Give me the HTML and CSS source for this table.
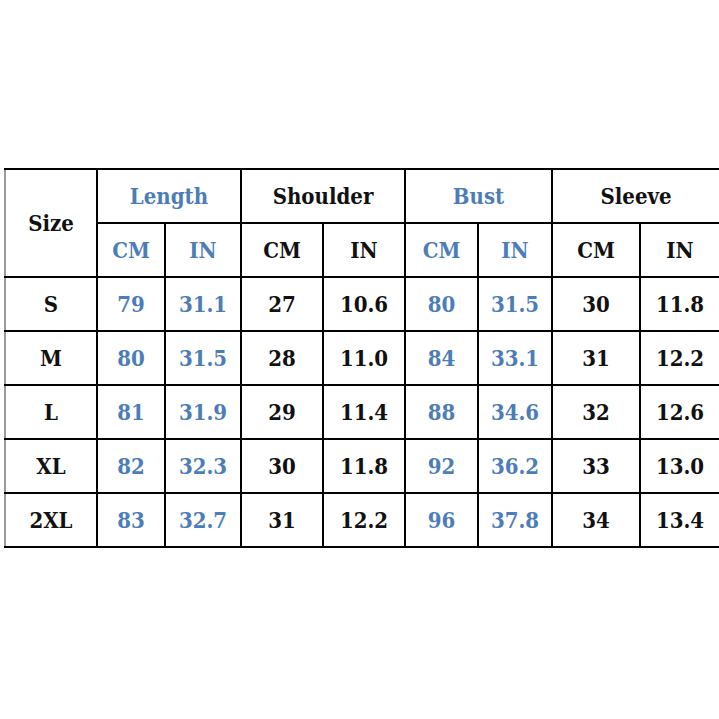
FILE: index.html
```html
<!DOCTYPE html>
<html>
<head>
<meta charset="utf-8">
<link rel="stylesheet" href="styles.css">
</head>
<body>
<div class="page">
<table class="sizes">
  <colgroup>
    <col class="c-size"><col class="c1"><col class="c2"><col class="c3"><col class="c4"><col class="c5"><col class="c6"><col class="c7"><col class="c8">
  </colgroup>
  <thead>
    <tr>
      <th rowspan="2" class="first">Size</th>
      <th colspan="2" class="blue">Length</th>
      <th colspan="2">Shoulder</th>
      <th colspan="2" class="blue">Bust</th>
      <th colspan="2">Sleeve</th>
    </tr>
    <tr>
      <th class="blue">CM</th><th class="blue">IN</th>
      <th>CM</th><th>IN</th>
      <th class="blue">CM</th><th class="blue">IN</th>
      <th>CM</th><th>IN</th>
    </tr>
  </thead>
  <tbody>
    <tr><td class="first">S</td><td class="blue">79</td><td class="blue">31.1</td><td>27</td><td>10.6</td><td class="blue">80</td><td class="blue">31.5</td><td>30</td><td>11.8</td></tr>
    <tr><td class="first">M</td><td class="blue">80</td><td class="blue">31.5</td><td>28</td><td>11.0</td><td class="blue">84</td><td class="blue">33.1</td><td>31</td><td>12.2</td></tr>
    <tr><td class="first">L</td><td class="blue">81</td><td class="blue">31.9</td><td>29</td><td>11.4</td><td class="blue">88</td><td class="blue">34.6</td><td>32</td><td>12.6</td></tr>
    <tr><td class="first">XL</td><td class="blue">82</td><td class="blue">32.3</td><td>30</td><td>11.8</td><td class="blue">92</td><td class="blue">36.2</td><td>33</td><td>13.0</td></tr>
    <tr><td class="first">2XL</td><td class="blue">83</td><td class="blue">32.7</td><td>31</td><td>12.2</td><td class="blue">96</td><td class="blue">37.8</td><td>34</td><td>13.4</td></tr>
  </tbody>
</table>
</div>
</body>
</html>
```
FILE: styles.css
```css
html, body {
  margin: 0;
  padding: 0;
  background: #ffffff;
}
.page {
  width: 719px;
  height: 719px;
  padding-top: 168px;
  padding-left: 4px;
  box-sizing: border-box;
}
.sizes {
  border-collapse: collapse;
  table-layout: fixed;
  width: 715px;
  font-family: "DejaVu Serif Condensed", "DejaVu Serif", "Liberation Serif", serif;
  font-stretch: condensed;
  font-weight: bold;
  font-size: 22px;
  color: #111111;
}
.c-size { width: 92px; }
.c1 { width: 68px; }
.c2 { width: 76px; }
.c3 { width: 82px; }
.c4 { width: 82px; }
.c5 { width: 73px; }
.c6 { width: 74px; }
.c7 { width: 88px; }
.c8 { width: 80px; }
.sizes th, .sizes td {
  border: 2px solid #000000;
  height: 52px;
  padding: 0;
  text-align: center;
  vertical-align: middle;
  font-weight: bold;
}
.sizes .first {
  border-left-color: #9a9a9a;
}
.blue {
  color: #4d7db8;
}
```
